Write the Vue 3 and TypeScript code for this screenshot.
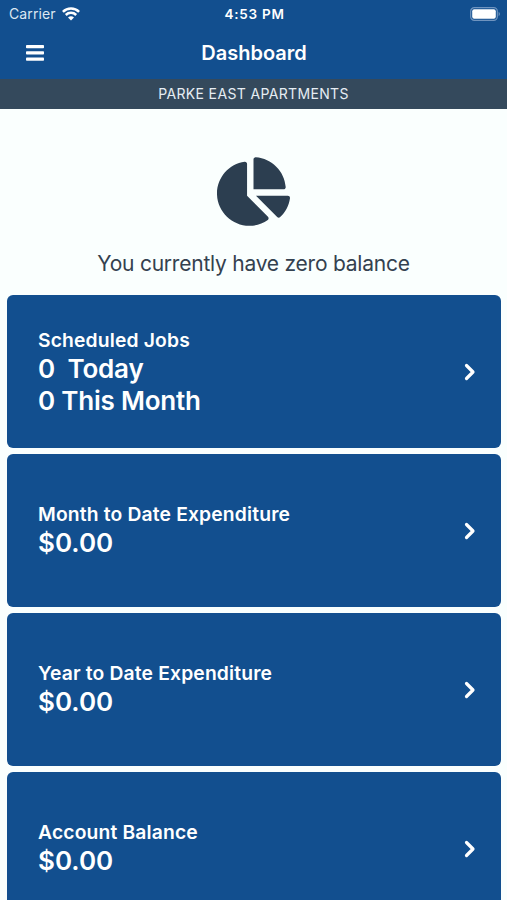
<script setup lang="ts">
interface Card {
  title: string
  lines: string[]
  labelled?: boolean
}

const property = 'PARKE EAST APARTMENTS'
const cards: Card[] = [
  { title: 'Scheduled Jobs', lines: ['0\u00a0 Today', '0 This Month'], labelled: true },
  { title: 'Month to Date Expenditure', lines: ['$0.00'] },
  { title: 'Year to Date Expenditure', lines: ['$0.00'] },
  { title: 'Account Balance', lines: ['$0.00'] },
]
</script>

<template>
  <div class="screen">
    <header class="header">
      <div class="status">
        <div class="carrier">
          <span class="carrier-name">Carrier</span>
          <svg class="wifi" viewBox="0 0 18 14" fill="none" stroke="#fff" stroke-width="2.5">
            <path d="M.9 4.800a11.500 11.500 0 0 1 16.200 0" />
            <path d="M3.800 8a7.400 7.400 0 0 1 10.400 0" />
            <path d="M9 13.600 6 10.600a4.300 4.300 0 0 1 6 0z" fill="#fff" stroke="none" />
          </svg>
        </div>
        <span class="time">4:53 PM</span>
        <svg class="battery" viewBox="0 0 31 14">
          <rect x="0.7" y="0.7" width="26.6" height="12.6" rx="3.6" fill="none" stroke="#6f94bf" stroke-width="1.2" />
          <rect x="2.2" y="2.2" width="23.6" height="9.6" rx="2" fill="#fff" />
          <path d="M28.6 4.8a2.5 2.5 0 0 1 0 4.4z" fill="#6f94bf" />
        </svg>
      </div>
      <div class="nav">
        <button class="menu" aria-label="Menu">
          <svg viewBox="0 0 18 16" fill="#fff">
            <rect y="0" width="18" height="3.3" rx=".8" />
            <rect y="6.2" width="18" height="3.3" rx=".8" />
            <rect y="12.4" width="18" height="3.3" rx=".8" />
          </svg>
        </button>
        <h1 class="title">Dashboard</h1>
      </div>
    </header>
    <div class="property"><span>{{ property }}</span></div>
    <section class="summary">
      <svg class="pie" viewBox="0 0 544 512" fill="#2c3e50">
        <path d="M527.79 288H290.5l158.03 158.03c6.04 6.04 15.98 6.53 22.19.68 38.7-36.46 65.32-85.61 73.13-140.86 1.34-9.46-6.51-17.85-16.06-17.85zm-15.83-64.8C503.72 103.74 408.26 8.28 288.8.04 279.68-.59 272 7.1 272 16.24V240h223.77c9.14 0 16.82-7.68 16.19-16.8zM224 288V50.71c0-9.55-8.39-17.4-17.84-16.06C86.99 51.49-4.1 155.6.14 280.37 4.5 408.51 114.83 513.59 243.03 511.98c50.4-.63 96.97-16.87 135.26-44.03 7.9-5.6 8.42-17.23 1.57-24.08L224 288z" />
      </svg>
      <p class="message">You currently have zero balance</p>
    </section>
    <main class="cards">
      <article v-for="card in cards" :key="card.title" class="card">
        <div class="content">
          <h2 class="card-title">{{ card.title }}</h2>
          <p v-for="line in card.lines" :key="line" class="value" :class="{ labelled: card.labelled }">{{ line }}</p>
        </div>
        <svg class="chevron" viewBox="0 0 12 18" fill="none" stroke="#fff" stroke-width="3.2" stroke-linecap="round" stroke-linejoin="round">
          <path d="M2.5 2.5 9 9l-6.5 6.5" />
        </svg>
      </article>
    </main>
  </div>
</template>

<style>
body {
  margin: 0;
  overflow: hidden;
}
</style>

<style scoped>
.screen {
  height: 900px;
  overflow: hidden;
  display: flex;
  flex-direction: column;
  background: #fafffe;
  color: #fff;
  font-family: Inter, 'Liberation Sans', sans-serif;
}

h1, h2, p {
  margin: 0;
}

.header {
  flex: none;
  height: 79px;
  background: #124f8f;
}

.status {
  display: grid;
  grid-template-columns: 1fr auto 1fr;
  align-items: center;
  height: 27px;
  padding: 0 7px 0 9px;
}

.carrier {
  display: flex;
  align-items: center;
  gap: 6px;
}

.carrier-name {
  font-size: 14px;
  line-height: 18px;
  letter-spacing: 0.12px;
  color: #dce7f2;
}

.wifi {
  width: 18px;
  height: 14px;
}

.time {
  font-size: 13.5px;
  line-height: 18px;
  font-weight: 600;
  letter-spacing: 0.75px;
}

.battery {
  justify-self: end;
  width: 31px;
  height: 14px;
  margin-right: -1px;
}

.nav {
  display: grid;
  grid-template-columns: 60px 1fr 60px;
  align-items: center;
  height: 51px;
}

.menu {
  display: flex;
  padding: 0 0 0 26px;
  border: 0;
  background: none;
}

.menu svg {
  width: 18px;
  height: 16px;
}

.title {
  padding-left: 1px;
  text-align: center;
  font-size: 20px;
  line-height: 28px;
  font-weight: 600;
}

.property {
  flex: none;
  height: 29.5px;
  display: flex;
  align-items: center;
  justify-content: center;
  background: #34495c;
  color: #e6edf3;
  font-size: 14px;
  line-height: 20px;
  letter-spacing: 0.35px;
}

.summary {
  flex: none;
  height: 186.5px;
  box-sizing: border-box;
  padding-top: 48.5px;
  display: flex;
  flex-direction: column;
  align-items: center;
}

.pie {
  width: 73px;
  height: 69px;
}

.message {
  margin-top: 22.5px;
  color: #34414f;
  font-size: 21px;
  line-height: 30px;
  letter-spacing: -0.23px;
}

.cards {
  display: flex;
  flex-direction: column;
  gap: 6px;
  padding: 0 6px 0 7px;
}

.card {
  flex: none;
  box-sizing: border-box;
  height: 152.9px;
  padding: 32px 25px 0 31px;
  display: flex;
  justify-content: space-between;
  border-radius: 6px;
  background: #124f8f;
}

.card:not(:first-child) {
  padding-top: 47px;
}

.card-title {
  font-size: 19.3px;
  line-height: 26px;
  font-weight: 600;
  letter-spacing: 0.16px;
}

.value {
  font-size: 26px;
  line-height: 31.5px;
  font-weight: 600;
}

.value.labelled {
  letter-spacing: -0.22px;
}

.chevron {
  width: 12px;
  height: 18px;
  margin-top: 35.5px;
}

.card:not(:first-child) .chevron {
  margin-top: 21px;
}
</style>
